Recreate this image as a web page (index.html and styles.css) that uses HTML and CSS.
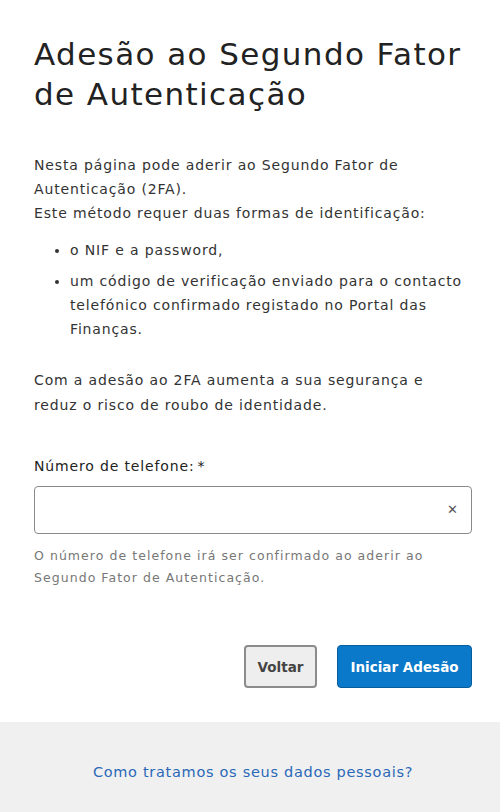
FILE: index.html
```html
<!DOCTYPE html>
<html lang="pt">
<head>
<meta charset="utf-8">
<title>Adesão ao Segundo Fator de Autenticação</title>
<link rel="stylesheet" href="styles.css">
</head>
<body>
<main class="content">
  <h1 class="title">Adesão ao Segundo Fator de Autenticação</h1>
  <p class="intro">Nesta página pode aderir ao Segundo Fator de Autenticação (2FA).<br>Este método requer duas formas de identificação:</p>
  <ul class="methods">
    <li>o NIF e a password,</li>
    <li>um código de verificação enviado para o contacto telefónico confirmado registado no Portal das Finanças.</li>
  </ul>
  <p class="benefit">Com a adesão ao 2FA aumenta a sua segurança e reduz o risco de roubo de identidade.</p>
  <form class="form">
    <label class="label" for="phone">Número de telefone:<span class="req">*</span></label>
    <div class="input-wrap">
      <input id="phone" class="input" type="text">
      <span class="clear">&#x2715;</span>
    </div>
    <p class="help">O número de telefone irá ser confirmado ao aderir ao Segundo Fator de Autenticação.</p>
    <div class="actions">
      <button type="button" class="btn btn-back">Voltar</button>
      <button type="button" class="btn btn-primary">Iniciar Adesão</button>
    </div>
  </form>
</main>
<footer class="footer">
  <a class="footer-link" href="#">Como tratamos os seus dados pessoais?</a>
</footer>
</body>
</html>
```
FILE: styles.css
```css
html, body {
  margin: 0;
  padding: 0;
  background: #fff;
}
body {
  font-family: "DejaVu Sans", "Open Sans", sans-serif;
  color: #333;
  font-size: 14px;
  letter-spacing: 0.85px;
}
.content {
  padding: 34px 28px 34px 34px;
}
.title {
  margin: 0;
  font-size: 31px;
  line-height: 40px;
  font-weight: 400;
  letter-spacing: 1.4px;
  color: #222;
}
.intro {
  margin: 39px 0 0;
  line-height: 24px;
}
.methods {
  margin: 13px 0 0;
  padding-left: 36px;
  line-height: 24px;
}
.methods li + li {
  margin-top: 7px;
}
.benefit {
  margin: 27px 0 0;
  line-height: 25px;
}
.form {
  margin-top: 38px;
}
.label {
  display: block;
  line-height: 20px;
  color: #222;
}
.req {
  margin-left: 3px;
}
.input-wrap {
  position: relative;
  margin-top: 10px;
}
.input {
  display: block;
  box-sizing: border-box;
  width: 100%;
  height: 48px;
  border: 1px solid #8a8a8a;
  border-radius: 4px;
  font: inherit;
  padding: 0 40px 0 12px;
  outline: none;
}
.clear {
  position: absolute;
  right: 14px;
  top: 15px;
  font-size: 13px;
  line-height: 18px;
  letter-spacing: 0;
  color: #555;
}
.help {
  margin: 11px 0 0;
  font-size: 12.5px;
  line-height: 22px;
  letter-spacing: 1.05px;
  color: #777;
}
.actions {
  display: flex;
  justify-content: flex-end;
  gap: 20px;
  margin-top: 56px;
}
.btn {
  font-family: inherit;
  font-size: 13.5px;
  font-weight: 700;
  letter-spacing: 0;
  height: 43px;
  border-radius: 4px;
  cursor: pointer;
  padding: 0;
}
.btn-back {
  width: 73px;
  background: #eeeeee;
  border: 2px solid #8c8c8c;
  color: #444;
}
.btn-primary {
  width: 135px;
  background: #0a79c9;
  border: 1px solid #075c9c;
  color: #fff;
}
.footer {
  background: #f0f0f0;
  text-align: center;
  padding: 38px 0 40px 6px;
}
.footer-link {
  color: #2a68b8;
  text-decoration: none;
  font-size: 14.5px;
  letter-spacing: 0.7px;
  line-height: 24px;
}
```
